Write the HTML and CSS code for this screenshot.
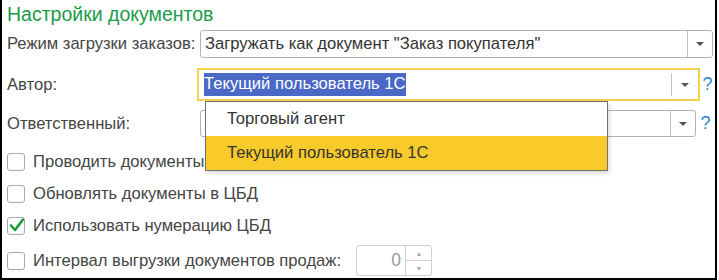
FILE: index.html
```html
<!DOCTYPE html>
<html lang="ru">
<head>
    <meta charset="UTF-8">
    <title>Настройки документов</title>
    <link rel="stylesheet" href="styles.css">
</head>
<body>
    <div class="frame">
        <h1 class="title">Настройки документов</h1>

        <div class="row row-mode">
            <label class="label">Режим загрузки заказов:</label>
            <div class="select">
                <span class="value">Загружать как документ "Заказ покупателя"</span>
                <span class="drop"><i class="arrow"></i></span>
            </div>
        </div>

        <div class="row row-author">
            <label class="label label-author">Автор:</label>
            <div class="select focused">
                <span class="value"><span class="selected">Текущий пользователь 1С</span></span>
                <span class="drop"><i class="arrow"></i></span>
            </div>
            <span class="help">?</span>
        </div>

        <div class="row row-resp">
            <label class="label">Ответственный:</label>
            <div class="select">
                <span class="value"></span>
                <span class="drop"><i class="arrow"></i></span>
            </div>
            <span class="help">?</span>
        </div>

        <div class="check-row">
            <span class="box"></span>
            <span class="check-label">Проводить документы</span>
        </div>
        <div class="check-row">
            <span class="box"></span>
            <span class="check-label">Обновлять документы в ЦБД</span>
        </div>
        <div class="check-row">
            <span class="box checked">
                <svg width="17" height="17" viewBox="0 0 17 17">
                    <path d="M3 8.5 L7 13 L15 2.5" fill="none" stroke="#1e9a3c" stroke-width="2.6" stroke-linecap="round" stroke-linejoin="round"/>
                </svg>
            </span>
            <span class="check-label">Использовать нумерацию ЦБД</span>
        </div>
        <div class="check-row row-interval">
            <span class="box"></span>
            <span class="check-label">Интервал выгрузки документов продаж:</span>
            <div class="number">
                <span class="num-value">0</span>
                <span class="spin">
                    <span class="spin-up">&#9652;</span>
                    <span class="spin-down">&#9662;</span>
                </span>
            </div>
        </div>

        <!-- выпадающий список поля "Автор" -->
        <ul class="popup">
            <li>Торговый агент</li>
            <li class="current">Текущий пользователь 1С</li>
        </ul>
    </div>
</body>
</html>
```

FILE: styles.css
```css
body {
    margin: 0;
    font-family: "Liberation Sans", Arial, sans-serif;
    color: #454545;
    background: #fff;
}

.frame {
    position: relative;
    box-sizing: border-box;
    width: 717px;
    height: 280px;
    border-left: 2px solid #000;
    border-right: 2px solid #000;
    border-bottom: 2px solid #000;
    padding: 0 0 0 5px;
}

.title {
    margin: 0;
    padding-top: 3px;
    height: 27px;
    font-size: 19.5px;
    line-height: 23px;
    font-weight: normal;
    color: #1b9b4b;
}

.row {
    display: flex;
    align-items: center;
    font-size: 16.6px;
}

.label {
    width: 193px;
    flex-shrink: 0;
}

.label-author {
    width: 190px;
}

.row-mode {
    height: 28px;
}

.row-mode .select {
    width: 513px;
}

.row-author {
    margin-top: 10px;
    height: 33px;
}

.row-author .select {
    width: 503px;
}

.row-resp {
    margin-top: 9px;
    height: 27px;
}

.row-resp .select {
    width: 496px;
}

.select {
    box-sizing: border-box;
    height: 100%;
    display: flex;
    border: 1px solid #b3b3b3;
    border-radius: 3px;
    background: #fff;
}

.select .value {
    flex: 1;
    display: flex;
    align-items: center;
    padding-left: 4px;
    color: #333;
    white-space: nowrap;
    overflow: hidden;
}

.select .drop {
    width: 24px;
    display: flex;
    align-items: center;
    justify-content: center;
    border-left: 1px solid #c4c4c4;
}

.focused {
    border: 2px solid #f3d04e;
    border-radius: 0;
}

.focused .value {
    padding-left: 5px;
}

.focused .drop {
    width: 26px;
    margin: 3px 0;
}

.selected {
    background: #4a69c6;
    color: #fff;
    padding: 1px 0 2px;
}

.arrow {
    width: 0;
    height: 0;
    border-left: 4px solid transparent;
    border-right: 4px solid transparent;
    border-top: 4px solid #555;
}

.help {
    flex: 1;
    text-align: center;
    color: #2f86cc;
    font-size: 18px;
}

.check-row {
    display: flex;
    align-items: center;
    height: 32px;
    font-size: 16.6px;
}

.row-resp + .check-row {
    margin-top: 9px;
}

.box {
    box-sizing: border-box;
    width: 18px;
    height: 18px;
    border: 1px solid #a9a9a9;
    border-radius: 3px;
    margin-right: 8px;
    flex-shrink: 0;
    position: relative;
}

.box svg {
    position: absolute;
    left: 0;
    top: -1px;
}

.row-interval {
    margin-top: 3px;
    height: 31px;
}

.number {
    box-sizing: border-box;
    display: flex;
    width: 76px;
    height: 31px;
    margin-left: 15px;
    border: 1px solid #d0d0d0;
    border-radius: 3px;
}

.num-value {
    flex: 1;
    text-align: right;
    padding-right: 4px;
    line-height: 29px;
    font-size: 17.5px;
    color: #9a9a9a;
}

.spin {
    width: 25px;
    display: flex;
    flex-direction: column;
    border-left: 1px solid #d0d0d0;
}

.spin span {
    flex: 1;
    display: flex;
    align-items: center;
    justify-content: center;
    font-size: 8px;
    color: #aaa;
}

.spin-up {
    border-bottom: 1px solid #d0d0d0;
}

.popup {
    position: absolute;
    left: 203px;
    top: 101px;
    width: 401px;
    margin: 0;
    padding: 0;
    list-style: none;
    background: #fff;
    border: 1px solid #707070;
    box-shadow: 2px 3px 4px rgba(0, 0, 0, 0.12);
    font-size: 16.6px;
    color: #333;
}

.popup li {
    height: 34px;
    line-height: 34px;
    padding-left: 21px;
}

.popup .current {
    background: #f8cb2a;
}
```
